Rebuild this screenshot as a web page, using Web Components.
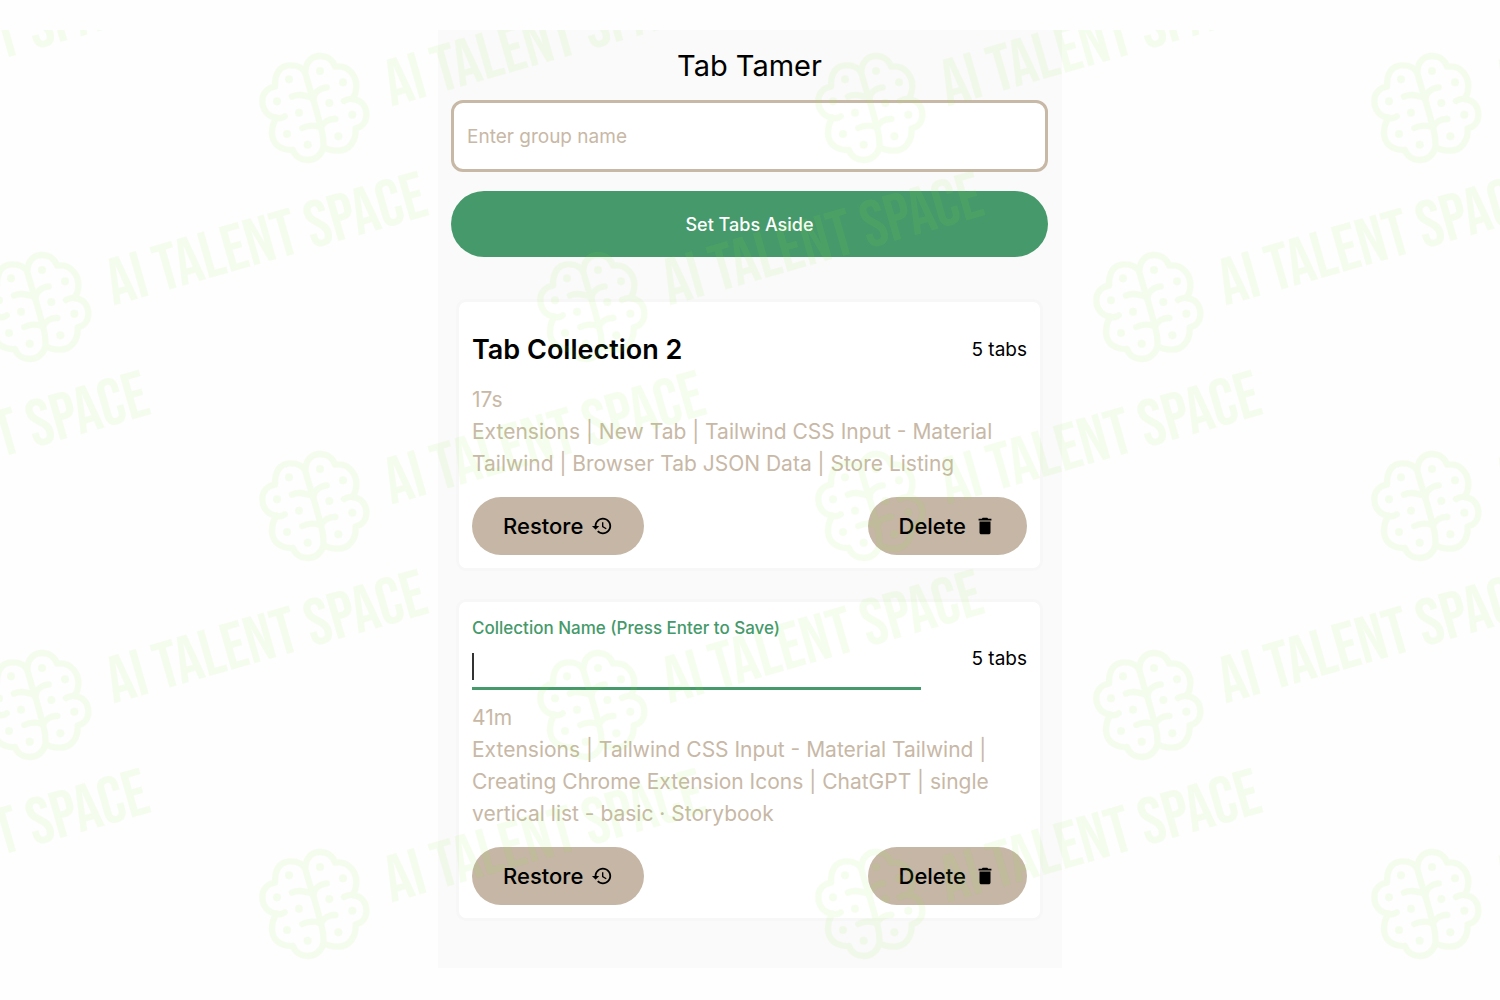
<!DOCTYPE html>
<html lang="en">
<head>
<meta charset="utf-8">
<title>Tab Tamer</title>
<style>
  body {
    margin: 0;
    background-color: #fefefe;
    color: #000;
    font-family: Inter, "Liberation Sans", sans-serif;
  }
</style>
</head>
<body>

<tab-tamer>
  <group-form slot="form"></group-form>

  <tab-collection count="5" age="17s">
    <collection-title slot="name">Tab Collection 2</collection-title>
    Extensions | New Tab | Tailwind CSS Input - Material Tailwind | Browser Tab JSON Data | Store Listing
  </tab-collection>

  <tab-collection count="5" age="41m">
    <collection-rename slot="name"></collection-rename>
    Extensions | Tailwind CSS Input - Material Tailwind | Creating Chrome Extension Icons | ChatGPT | single vertical list - basic · Storybook
  </tab-collection>
</tab-tamer>

<script>
//PAGE - the panel in the middle with the watermark over it
var template_tamer = document.createElement("template");
template_tamer.innerHTML = `
<style>
  :host {
    display: block;
    position: relative;
    margin: 30px 0;
  }

  main {
    box-sizing: border-box;
    max-width: 624px;
    margin: 0 auto;
    padding: 14px 14px 47px 13px;
    background-color: #fafafa;
  }

  h1 {
    margin: 0 0 12px;
    font-size: 29px;
    line-height: 44px;
    font-weight: 400;
    text-align: center;
  }

  .collections {
    display: flex;
    flex-direction: column;
    gap: 28px;
    margin: 42px 5px 0;
  }
</style>

<main>
  <h1>Tab Tamer</h1>
  <slot name="form"></slot>
  <div class="collections"><slot></slot></div>
</main>
<water-mark></water-mark>
`;

class TabTamer extends HTMLElement {
  constructor(){
    super();
    this.attachShadow({mode:"open"});
  }

  connectedCallback(){
    this.shadowRoot.appendChild(template_tamer.content.cloneNode(true));
  }
}

//FORM - group name and the big green button
var template_form = document.createElement("template");
template_form.innerHTML = `
<style>
  :host {
    display: block;
  }

  form {
    display: flex;
    flex-direction: column;
    gap: 19px;
  }

  input {
    box-sizing: border-box;
    width: 100%;
    height: 72px;
    padding: 0 13px;
    border: 3px solid #c8b8a6;
    border-radius: 12px;
    background-color: #fff;
    font: inherit;
    font-size: 19px;
  }

  input::placeholder {
    color: #c8b8a6;
    opacity: 1;
  }

  button {
    height: 66px;
    border: 0;
    border-radius: 33px;
    background-color: #45996a;
    color: #fff;
    font: inherit;
    font-size: 18px;
    font-weight: 500;
  }
</style>

<form>
  <input type="text" placeholder="Enter group name" aria-label="Group name">
  <button type="button">Set Tabs Aside</button>
</form>
`;

class GroupForm extends HTMLElement {
  constructor(){
    super();
    this.attachShadow({mode:"open"});
  }

  connectedCallback(){
    this.shadowRoot.appendChild(template_form.content.cloneNode(true));
  }
}

//CARD - one saved collection
var template_collection = document.createElement("template");
template_collection.innerHTML = `
<style>
  :host {
    display: block;
    padding: 13px;
    border: 3px solid #f7f7f7;
    border-radius: 10px;
    background-color: #fff;
  }

  header {
    display: flex;
    align-items: center;
    justify-content: space-between;
    gap: 50px;
  }

  .count {
    flex: none;
    font-size: 19px;
  }

  p {
    margin: 0;
    color: #c8b8a6;
    font-size: 21px;
    line-height: 32px;
  }

  footer {
    display: flex;
    justify-content: space-between;
    margin-top: 17px;
  }

  button {
    display: flex;
    align-items: center;
    gap: 8px;
    height: 58px;
    padding: 0 31px;
    border: 0;
    border-radius: 29px;
    background-color: #c5b6a5;
    color: #000;
    font: inherit;
    font-size: 22px;
    font-weight: 500;
  }

  svg {
    width: 22px;
    height: 22px;
    fill: currentColor;
  }
</style>

<header>
  <slot name="name"></slot>
  <span class="count"></span>
</header>
<p class="age"></p>
<p><slot></slot></p>
<footer>
  <button type="button">Restore
    <svg viewBox="0 0 24 24" aria-hidden="true"><path d="M13 3c-4.97 0-9 4.03-9 9H1l3.89 3.89.07.14L9 12H6c0-3.87 3.13-7 7-7s7 3.13 7 7-3.13 7-7 7c-1.93 0-3.68-.79-4.94-2.06l-1.42 1.42C8.27 19.99 10.51 21 13 21c4.97 0 9-4.03 9-9s-4.03-9-9-9m-1 5v5l4.28 2.54.72-1.21-3.5-2.08V8z"/></svg>
  </button>
  <button type="button">Delete
    <svg viewBox="0 0 24 24" aria-hidden="true"><path d="M6 19c0 1.1.9 2 2 2h8c1.1 0 2-.9 2-2V7H6zM19 4h-3.5l-1-1h-5l-1 1H5v2h14z"/></svg>
  </button>
</footer>
`;

class TabCollection extends HTMLElement {
  constructor(){
    super();
    this.attachShadow({mode:"open"});
  }

  connectedCallback(){
    this.shadowRoot.appendChild(template_collection.content.cloneNode(true));
    this.shadowRoot.querySelector(".count").textContent = this.getAttribute("count") + " tabs";
    this.shadowRoot.querySelector(".age").textContent = this.getAttribute("age");
  }
}

//NAME of a collection, at rest
var template_title = document.createElement("template");
template_title.innerHTML = `
<style>
  :host {
    display: block;
  }

  h2 {
    margin: 0;
    font-size: 27px;
    line-height: 69px;
    font-weight: 600;
  }
</style>

<h2><slot></slot></h2>
`;

class CollectionTitle extends HTMLElement {
  constructor(){
    super();
    this.attachShadow({mode:"open"});
  }

  connectedCallback(){
    this.shadowRoot.appendChild(template_title.content.cloneNode(true));
  }
}

//NAME of a collection, while it is edited
var template_rename = document.createElement("template");
template_rename.innerHTML = `
<style>
  :host {
    display: block;
    flex: 1;
    padding-bottom: 12px;
  }

  label {
    display: block;
    color: #45996a;
    font-size: 17px;
    line-height: 26px;
    font-weight: 500;
  }

  /* the cursor is painted, so it shows without focus too */
  input {
    display: block;
    box-sizing: border-box;
    width: 100%;
    height: 49px;
    padding: 0;
    border: 0;
    border-bottom: 3px solid #45996a;
    outline: 0;
    background: linear-gradient(#333, #333) 0 12px / 2px 27px no-repeat;
    font: inherit;
    font-size: 22px;
    caret-color: transparent;
  }
</style>

<label for="name">Collection Name (Press Enter to Save)</label>
<input id="name" type="text">
`;

class CollectionRename extends HTMLElement {
  constructor(){
    super();
    this.attachShadow({mode:"open"});
  }

  connectedCallback(){
    this.shadowRoot.appendChild(template_rename.content.cloneNode(true));
  }
}

//WATERMARK - rows of brain + words, every second row is shifted by half a tile
var template_mark = document.createElement("template");
template_mark.innerHTML = `
<style>
  :host {
    display: block;
    position: absolute;
    inset: 0;
    overflow: hidden;
    pointer-events: none;
    opacity: 0.08;
    color: rgb(140, 245, 50);
  }

  .rows {
    margin-top: -22px;
  }

  .row {
    display: flex;
    align-items: center;
    height: 199px;
    margin-left: -297px;
  }

  .row:nth-child(even) {
    margin-left: -19px;
  }

  .tile {
    flex: none;
    width: 556px;
  }

  .mark {
    display: flex;
    align-items: center;
    gap: 20px;
    transform: rotate(-16deg);
    transform-origin: 55px 50%;
  }

  svg {
    flex: none;
    width: 110px;
    height: 110px;
    overflow: visible;
    transform: rotate(16deg);
  }

  span {
    font-family: "Bebas Neue", "Roboto Condensed", "Liberation Sans", sans-serif;
    font-size: 66px;
    font-weight: 400;
    white-space: nowrap;
  }
</style>

<div class="rows"></div>
`;

var brain = `
<svg viewBox="57 102 330 330" aria-hidden="true">
  <g fill="none" stroke="currentColor" stroke-width="19" stroke-linecap="round" stroke-linejoin="round">
    <path d="M196 162 C196 128 216 111 240 111 C263 111 279 124 285 143 C326 137 357 172 347 219 C346 226 342 233 337 240 C364 243 379 262 379 287 C379 309 366 324 347 328 C349 366 328 395 294 395 C275 395 262 392 251 384 C243 408 228 423 203 423 C181 423 165 411 159 393 C120 395 96 373 96 342 C96 325 100 310 110 296 C83 293 67 272 67 246 C67 222 82 207 105 203 C104 162 120 141 148 139 C174 138 190 149 196 162 C202 185 210 211 218 237 C229 270 236 302 243 324 C249 345 251 367 251 384"/>
    <path d="M218 237 C198 230 176 223 156 233"/>
    <path d="M221 238 C223 222 237 208 260 205"/>
    <path d="M337 240 C328 238 320 241 312 246"/>
    <path d="M110 296 C119 299 128 297 134 292"/>
    <path d="M241 325 C221 317 203 319 187 327"/>
    <path d="M243 324 C251 309 268 299 286 300"/>
  </g>
  <g fill="currentColor">
    <circle cx="240" cy="156" r="12"/><circle cx="147" cy="181" r="12"/>
    <circle cx="309" cy="190" r="12"/><circle cx="111" cy="247" r="12"/>
    <circle cx="268" cy="252" r="12"/><circle cx="177" cy="281" r="12"/>
    <circle cx="337" cy="287" r="12"/><circle cx="141" cy="345" r="12"/>
    <circle cx="295" cy="352" r="12"/><circle cx="203" cy="377" r="12"/>
  </g>
</svg>`;

class WaterMark extends HTMLElement {
  constructor(){
    super();
    this.attachShadow({mode:"open"});
  }

  connectedCallback(){
    this.shadowRoot.appendChild(template_mark.content.cloneNode(true));
    var tile = `<div class="tile"><div class="mark">${brain}<span>AI TALENT SPACE</span></div></div>`;
    var rows = "";
    for (var i = 0; i < 5; i++) {
      rows += `<div class="row">${tile.repeat(i % 2 ? 3 : 4)}</div>`;
    }
    this.shadowRoot.querySelector(".rows").innerHTML = rows;
  }
}

//MUST HAVE - define the tags for the custom elements
customElements.define("tab-tamer", TabTamer);
customElements.define("group-form", GroupForm);
customElements.define("tab-collection", TabCollection);
customElements.define("collection-title", CollectionTitle);
customElements.define("collection-rename", CollectionRename);
customElements.define("water-mark", WaterMark);
</script>
</body>
</html>
